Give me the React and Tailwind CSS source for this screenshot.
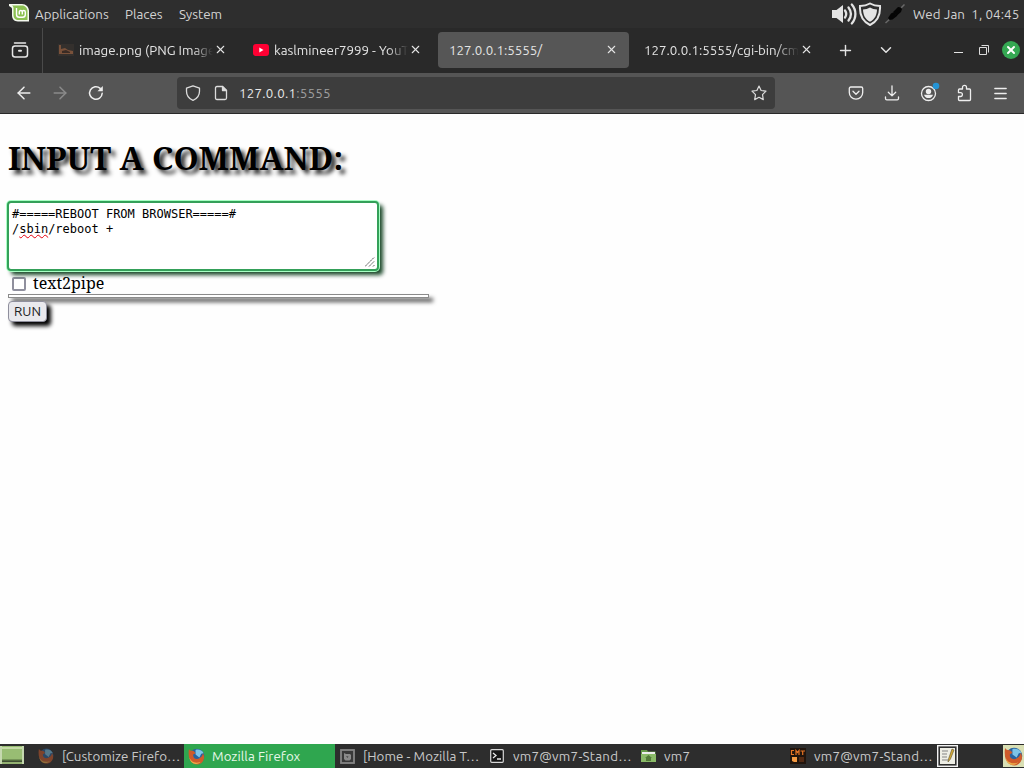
import { X, Plus, ChevronDown, ArrowLeft, ArrowRight, Menu } from 'lucide-react';

const MintLogo = () => (
    <svg width="22" height="20" viewBox="0 0 22 20" className="shrink-0">
        <path d="M0 1h13c4 0 7 3 7 7v10.500H9c-4 0-6-3-6-6V6C3 4 1 4 0 3z" fill="#f4f8ee" />
        <path d="M3 2.500h10c3 0 5.500 2.500 5.500 5.500v9H9.500c-3 0-5-2-5-5V5c0-1.200-.6-2-1.500-2.500z" fill="#8cc152" />
        <path d="M7.500 5v6.500c0 1.800 1 2.800 2.800 2.800h3.200c1.800 0 2.800-1 2.800-2.800V9c0-2-3-2-3 0v2.500M13.300 9c0-2-3-2-3 0v2.500" fill="none" stroke="#fff" strokeWidth="1.400" />
    </svg>
);

const FirefoxIcon = ({ size = 18, dim = false }) => (
    <svg width={size} height={size} viewBox="0 0 18 18" className={dim ? 'shrink-0 opacity-50' : 'shrink-0'}>
        <circle cx="9.500" cy="8.500" r="7.800" fill="#28639f" />
        <path d="M8 2c3-1 7 0 8.500 3.500L14 6l-2 4-4-3z" fill="#7cc4e8" />
        <path d="M1 1c1 1.500 2 2 4 2C6 3 7 4 8 5.500L5.500 7c-.5 4 3.500 6 7 3.500 2-1.200 3-3 3.200-5C19 10 16 17 10 17.500 3 17.500-.5 11 1 1z" fill="#cf5b2b" />
        <path d="M1.500 10c1.500 4.500 6 7 12 4.500-4 4.500-11 2.500-12-4.500z" fill="#eeb04a" />
    </svg>
);

const PictureIcon = () => (
    <svg width="16" height="12" viewBox="0 0 16 12" className="shrink-0">
        <rect width="16" height="12" fill="#34302d" />
        <path d="M1 1v9h14V7L10 6 7 4 3 5V1z" fill="#79513a" />
        <path d="M4 7l4-1 4 2v1H4z" fill="#3a2b24" />
    </svg>
);

const YouTubeIcon = () => (
    <svg width="16" height="12" viewBox="0 0 16 12" className="shrink-0">
        <rect width="16" height="12" rx="3" fill="#ff0033" />
        <path d="M6.300 3.500v5l4.200-2.500z" fill="#fff" />
    </svg>
);

const TabsIcon = () => (
    <svg width="18" height="18" viewBox="0 0 18 18" fill="none" stroke="#e8e8e8" strokeWidth="1.500" strokeLinecap="round">
        <path d="M3.500 2h11" />
        <path d="M1.500 7.500C1.500 6 2.500 5 4 5h10c1.500 0 2.500 1 2.500 2.500v6c0 1.500-1 2.500-2.500 2.500H4c-1.500 0-2.500-1-2.500-2.500z" />
        <path d="M8 9.700h2" strokeWidth="2" />
    </svg>
);

const ReloadIcon = () => (
    <svg width="16" height="16" viewBox="0 0 16 16" fill="none" stroke="#eeeeee" strokeWidth="1.500" strokeLinecap="round">
        <path d="M14.200 8.300a6.300 6.300 0 1 1-2-4.900" />
        <path d="M14.800 1v5.300H9.500z" fill="#eee" stroke="none" />
    </svg>
);

const ShieldIcon = () => (
    <svg width="16" height="16" viewBox="0 0 16 16" fill="none" stroke="#dcdcdc" strokeWidth="1.300" strokeLinejoin="round">
        <path d="M8 .8l6.500 2.400v3c0 4-2.500 7.500-6.500 9.200C4 13.700 1.500 10.200 1.500 6.200v-3z" />
    </svg>
);

const PageIcon = () => (
    <svg width="14" height="16" viewBox="0 0 14 16" fill="none" stroke="#dcdcdc" strokeWidth="1.300" strokeLinejoin="round">
        <path d="M3 1.500h5.500l4 4V13c0 1-.5 1.500-1.500 1.500H3c-1 0-1.500-.5-1.500-1.500V3c0-1 .5-1.500 1.500-1.500z" />
        <path d="M8.500 1.500v4h4z" fill="#dcdcdc" />
    </svg>
);

const StarIcon = () => (
    <svg width="16" height="16" viewBox="0 0 16 16" fill="none" stroke="#dcdcdc" strokeWidth="1.200" strokeLinejoin="round">
        <path d="M8 1l2.100 4.500 4.900.7-3.500 3.500.8 4.900L8 12.300l-4.300 2.300.8-4.900L1 6.200l4.900-.7z" />
    </svg>
);

const PocketIcon = () => (
    <svg width="16" height="16" viewBox="0 0 16 16" fill="none" stroke="#eeeeee" strokeWidth="1.300" strokeLinecap="round" strokeLinejoin="round">
        <path d="M2.800 2h10.400c.9 0 1.500.6 1.500 1.500v4a6.700 6.700 0 0 1-13.400 0v-4c0-.9.600-1.500 1.500-1.500z" />
        <path d="M5 6.300l3 2.900 3-2.900" />
    </svg>
);

const DownloadIcon = () => (
    <svg width="16" height="16" viewBox="0 0 16 16" fill="none" stroke="#eeeeee" strokeWidth="1.300" strokeLinecap="round" strokeLinejoin="round">
        <path d="M8 .8v10M4.300 7.200L8 10.900l3.700-3.700" />
        <path d="M1.500 12v1.500c0 .8.500 1.300 1.300 1.300h10.400c.8 0 1.300-.5 1.300-1.300V12" />
    </svg>
);

const AccountIcon = () => (
    <svg width="20" height="20" viewBox="0 0 20 20" className="shrink-0">
        <circle cx="8.500" cy="11.500" r="7" fill="none" stroke="#eeeeee" strokeWidth="1.300" />
        <circle cx="8.500" cy="9.500" r="2.700" fill="#eee" />
        <path d="M4 12.700h9a4.700 4.700 0 0 1-9 0z" fill="#eee" />
        <circle cx="16" cy="4" r="3.300" fill="#2494d6" />
    </svg>
);

const PuzzleIcon = () => (
    <svg width="16" height="18" viewBox="0 0 16 18" fill="none" stroke="#eeeeee" strokeWidth="1.300" strokeLinejoin="round">
        <path d="M6.500 5V3.300a2 2 0 0 1 4 0V5h3c.6 0 1 .4 1 1v9.500c0 .6-.4 1-1 1h-10c-.6 0-1-.4-1-1v-3h2a1.900 1.900 0 0 0 0-3.800h-2V6c0-.6.400-1 1-1z" />
    </svg>
);

const VolumeIcon = () => (
    <svg width="26" height="24" viewBox="0 0 26 24" fill="none" stroke="#e4e4e4" strokeWidth="2.300" strokeLinecap="round">
        <path d="M0 8h4.500L11 3v18l-6.500-5H0z" fill="#e4e4e4" stroke="none" />
        <path d="M13 8.500c1.600 2.300 1.600 4.700 0 7M16.500 5.500c3 4 3 9 0 13M19.800 2.500c4.800 5.500 4.800 13.500 0 19" />
    </svg>
);

const SecurityIcon = () => (
    <svg width="24" height="24" viewBox="0 0 24 24">
        <path d="M12 1.500c3.500 2 6.500 2.500 10 2.500.5 8-2 15-10 19C4 19 1.500 12 2 4c3.500 0 6.500-.5 10-2.500z" fill="none" stroke="#e4e4e4" strokeWidth="2" />
        <path d="M12 5.500c2 1.300 4.500 1.800 7 2-.2 5.500-2 9.500-7 12.200-5-2.700-6.800-6.700-7-12.200 2.500-.2 5-.7 7-2z" fill="#e4e4e4" />
    </svg>
);

const PlugIcon = () => (
    <svg width="20" height="20" viewBox="0 0 20 20">
        <path d="M.5 19l4.500-4M15 5l4.500-4.500" stroke="#696969" strokeWidth="1.500" />
        <path d="M3 14l3-4.500 2-1 2.500 2 2-.5-.5 2-4.500 3.500-3 .5z" fill="#050505" />
        <path d="M8 8l5-5 3 .5 1 1.500-1 3-4 3.500-1-1-1 .5z" fill="#050505" />
    </svg>
);

const TerminalIcon = () => (
    <svg width="14" height="14" viewBox="0 0 14 14" className="shrink-0">
        <rect x=".7" y=".7" width="12.600" height="12.600" rx="1" fill="#161616" stroke="#d8d8d8" strokeWidth="1.200" />
        <path d="M3 4l3 2.500L3 9M7 10h4" fill="none" stroke="#e8e8e8" strokeWidth="1.300" />
    </svg>
);

const HomeAppIcon = () => (
    <svg width="15" height="15" viewBox="0 0 15 15" className="shrink-0">
        <rect x="1" y="1" width="13" height="13" fill="#393939" stroke="#858585" strokeWidth="1.800" />
        <path d="M4 4l2 1h4l1 1v4l-1.500 1.500h-4L4 10z" fill="#8b8b8b" />
        <path d="M6 7l2.500.5L7.500 9z" fill="#444" />
    </svg>
);

const FolderIcon = () => (
    <svg width="15" height="14" viewBox="0 0 15 14" className="shrink-0">
        <path d="M0 1h6l1 1.500h7.500V13H0z" fill="#669848" />
        <path d="M1 3h13v2H1z" fill="#eeeeee" />
        <path d="M0 5h15v8H0z" fill="#8aba68" />
        <path d="M7.500 6L4 9h1v3h5V9h1z" fill="#527b38" />
    </svg>
);

const GmtIcon = () => (
    <svg width="16" height="16" viewBox="0 0 16 16" className="shrink-0">
        <rect width="16" height="16" fill="#21150d" />
        <path d="M4 2.500H1.500v4H4M6 7V2.500l1.500 2 1.500-2V7M10.500 3H15M12.700 3v4" fill="none" stroke="#e77424" strokeWidth="1.200" />
        <path d="M2 9h5v5H4l-2-1z" fill="#f49a42" />
        <path d="M9 9h5v5H9z" fill="#542a13" />
    </svg>
);

const DesktopIcon = () => (
    <svg width="24" height="20" viewBox="0 0 24 20" className="shrink-0">
        <path d="M1 0h22v15H1z" fill="#98bd73" />
        <path d="M0 0h2v18H0zM22 0h2v18h-2z" fill="#c5d8af" />
        <path d="M2 1h20v2H2z" fill="#c5dba7" />
        <path d="M2 13.500h20v2H2z" fill="#526c3d" />
        <path d="M2 16h20v2H2z" fill="#93b171" />
    </svg>
);

const NotesIcon = () => (
    <svg width="21" height="22" viewBox="0 0 21 22" className="shrink-0">
        <rect x=".7" y=".7" width="19.600" height="20.600" fill="#303030" stroke="#f2f2f2" strokeWidth="1.400" />
        <rect x="3" y="3" width="15" height="16" fill="#eeeee5" />
        <path d="M5 6h6M5 9h5M5 12h5M5 15h6" stroke="#858585" />
        <path d="M15 4l-3.500 10-.5 3 2.500-3L17 5z" fill="#d5aa36" stroke="#5d512d" strokeWidth=".6" />
    </svg>
);

const TABS = [
    { title: 'image.png (PNG Image', icon: <PictureIcon />, box: 'w-[194px] pl-[15px]', text: 'w-[134px]' },
    { title: 'kaslmineer7999 - YouTube', icon: <YouTubeIcon />, box: 'w-[201px] pl-4', text: 'w-[134px]' },
    { title: '127.0.0.1:5555/', active: true, box: 'w-[191px] pl-[11px] bg-[#565656]', text: 'w-[155px]' },
    { title: '127.0.0.1:5555/cgi-bin/cmd', box: 'w-[194px] pl-[15px]', text: 'w-[155px]' },
];

const TASKS = [
    { title: '[Customize Firefo…', icon: <FirefoxIcon size={16} dim />, box: 'w-[147px] pl-[1px]', text: 'ml-2' },
    { title: 'Mozilla Firefox', icon: <FirefoxIcon size={17} />, active: true, box: 'w-[151px] pl-1', text: 'ml-[7px] tracking-[0.05px]' },
    { title: '[Home - Mozilla T…', icon: <HomeAppIcon />, box: 'w-[151px] pl-[5px]', text: 'ml-2 tracking-[0.05px]' },
    { title: 'vm7@vm7-Stand…', icon: <TerminalIcon />, box: 'w-[151px] pl-1', text: 'ml-[9px] tracking-[0.25px]' },
    { title: 'vm7', icon: <FolderIcon />, box: 'w-[150px] pl-1', text: 'ml-2 tracking-[0.25px]' },
    { title: 'vm7@vm7-Stand…', icon: <GmtIcon />, box: 'w-[150px] pl-[3px]', text: 'ml-2 tracking-[0.25px]' },
];

const Panel = () => (
    <header className="flex h-7 shrink-0 items-center bg-[#2e2e2e] text-[13.333px] text-[#d3d3d3]">
        <div className="ml-[9px] flex h-full w-[26px] items-center pb-0.5">
            <MintLogo />
        </div>
        <span className="w-[90px] pt-0.5">Applications</span>
        <span className="w-[54px] pt-0.5">Places</span>
        <span className="pt-0.5">System</span>
        <div className="ml-auto flex items-center">
            <VolumeIcon />
            <SecurityIcon />
            <div className="mr-2 ml-[3px]">
                <PlugIcon />
            </div>
            <span className="w-[111px] pt-0.5 tracking-[0.1px] whitespace-pre">Wed Jan  1, 04:45</span>
        </div>
    </header>
);

const TabBar = () => (
    <div className="flex h-[45px] shrink-0 items-center bg-[#292929] text-[13.333px] text-[#e4e4e4]">
        <div className="flex h-full w-[43px] items-center border-r border-[#4a4a4a] pb-px pl-[11px]">
            <TabsIcon />
        </div>
        {TABS.map((tab) => (
            <div key={tab.title} className={`-mt-[2px] flex h-9 shrink-0 items-center rounded ${tab.box}`}>
                {tab.icon}
                <span className={`overflow-hidden pt-0.5 whitespace-nowrap ${tab.text} ${tab.icon ? 'ml-[5px]' : ''} ${tab.active ? '' : 'mask-r-from-85%'}`}>
                    {tab.title}
                </span>
                <X size={13} strokeWidth={2} className="ml-[1px] shrink-0" />
            </div>
        ))}
        <Plus size={17} strokeWidth={2} className="-mt-px ml-[14px] shrink-0" />
        <ChevronDown size={18} strokeWidth={2} className="-mt-[2px] ml-[23px] shrink-0" />
        <div className="-mt-[2px] ml-auto flex items-center">
            <span className="mt-[5px] h-px w-[9px] bg-[#e4e4e4]" />
            <svg width="12" height="12" viewBox="0 0 12 12" fill="none" stroke="#dcdcdc" className="ml-[15px]">
                <path d="M1.500 3.500h7v7h-7zM3.500 1.500h7v7" />
            </svg>
            <span className="mr-1 ml-3 flex size-[18px] items-center justify-center rounded-full bg-[#35a853]">
                <X size={12} strokeWidth={4} color="#fff" />
            </span>
        </div>
    </div>
);

const Toolbar = () => (
    <div className="flex h-[41px] shrink-0 items-center border-b border-[#292929] bg-[#555555] text-[13.333px]">
        <ArrowLeft size={20} strokeWidth={1.800} color="#eeeeee" className="ml-3.5" />
        <ArrowRight size={20} strokeWidth={1.800} color="#8b8b8b" className="ml-4" />
        <div className="ml-[18px]">
            <ReloadIcon />
        </div>
        <div className="ml-[73px] flex h-8 w-[598px] items-center rounded bg-[#3d3d3d] pl-2">
            <ShieldIcon />
            <div className="ml-[13px]">
                <PageIcon />
            </div>
            <span className="ml-[11px] pt-0.5 tracking-[0.25px] text-[#e8e8e8]">
                127.0.0.1<span className="text-[#a0a0a0]">:5555</span>
            </span>
            <div className="mr-2 ml-auto">
                <StarIcon />
            </div>
        </div>
        <div className="ml-[73px] flex items-center">
            <PocketIcon />
            <div className="ml-5">
                <DownloadIcon />
            </div>
            <div className="-mt-[3px] ml-5">
                <AccountIcon />
            </div>
            <div className="ml-4">
                <PuzzleIcon />
            </div>
            <Menu size={17} strokeWidth={1.900} color="#eeeeee" className="ml-5" />
        </div>
    </div>
);

const CommandPage = () => (
    <main className="min-h-0 flex-1 bg-[#fefefe] pl-2 text-black">
        <h1 className="pt-[23px] font-['Noto_Serif','DejaVu_Serif_Condensed','DejaVu_Serif',serif] text-[32px] leading-[42px] font-bold whitespace-nowrap [text-shadow:4px_4px_4px_#000000dd]">
            INPUT A COMMAND:
        </h1>
        <div className="relative mt-[22px] -ml-px h-[70px] w-[372px] rounded-[4px] border-2 border-[#34a059] bg-white pt-[4px] pl-[3px] font-['DejaVu_Sans_Mono',monospace] text-[12px] leading-[15px] shadow-[0_0_0_1px_#a8ffc4,4px_4px_4px_#164425]">
            <p>#=====REBOOT FROM BROWSER=====#</p>
            <p>
                /<span className="underline decoration-red-600 decoration-wavy decoration-1 underline-offset-1">sbin</span>/reboot +
            </p>
            <svg width="10" height="10" viewBox="0 0 10 10" className="absolute right-0.5 bottom-0.5" stroke="#555" strokeDasharray="2 .6">
                <path d="M0 9.500L9.500 0M4 9.500L9.500 4M8 9.500L9.500 8" />
            </svg>
        </div>
        <label className="mt-px flex h-[22px] items-center font-['Noto_Serif','DejaVu_Serif_Condensed','DejaVu_Serif',serif] text-[16px]">
            <span className="mt-0.5 mr-[7px] ml-1 size-[14px] rounded-[2px] border-2 border-[#8f8f9d] bg-white" />
            text2pipe
        </label>
        <div className="h-1 w-[421px] border border-[#8b8b8b] bg-white shadow-[4px_4px_4px_#000000b0]" />
        <button className="mt-[3px] flex h-[21px] w-[39px] items-center justify-center rounded-[4px] border border-[#8f8f9d] bg-[#e9e9ed] text-[13.333px] text-[#222] shadow-[4px_4px_4px_#000]">
            RUN
        </button>
    </main>
);

const Taskbar = () => (
    <footer className="flex h-6 shrink-0 items-center bg-[#2d2d2d] text-[13.333px] text-[#c9c9c9]">
        <div className="w-[37px] shrink-0">
            <DesktopIcon />
        </div>
        {TASKS.map((task, i) => (
            <div key={i} className={`flex h-full shrink-0 items-center whitespace-nowrap ${task.box} ${task.active ? 'bg-[#2fa64f] text-[#e8f8e9]' : ''}`}>
                {task.icon}
                <span className={`pt-0.5 ${task.text}`}>{task.title}</span>
            </div>
        ))}
        <NotesIcon />
        <span className="ml-auto flex h-[22px] w-[21px] items-center justify-center bg-[#d9dfb4]">
            <FirefoxIcon size={19} />
        </span>
    </footer>
);

const App = () => (
    <div className="flex h-screen w-[1024px] flex-col overflow-hidden font-['Ubuntu','Noto_Sans',sans-serif]">
        <Panel />
        <TabBar />
        <Toolbar />
        <CommandPage />
        <Taskbar />
    </div>
);

export default App;
